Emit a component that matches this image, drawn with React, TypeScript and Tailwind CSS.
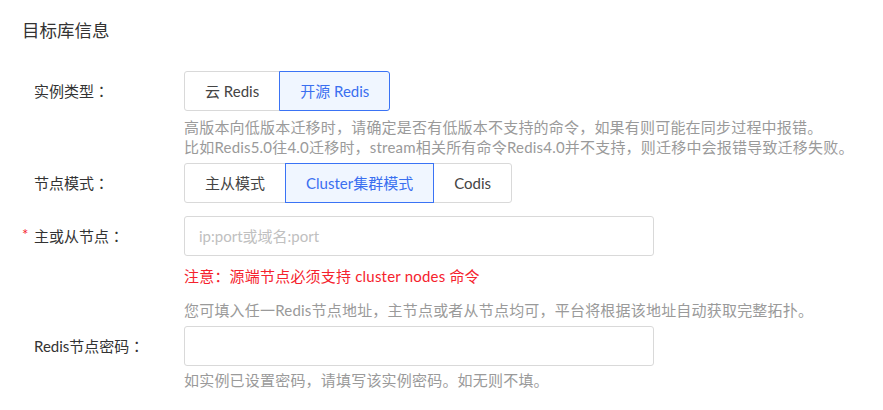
import { useState } from 'react'

const FONT = "font-['Lato','Noto_Sans_CJK_SC',sans-serif]"

function Colon() {
  return <span className="font-['Noto_Sans_CJK_TC',sans-serif]">：</span>
}

function Segmented({ options, value, onChange }: { options: string[]; value: string; onChange: (v: string) => void }) {
  return (
    <div className="flex">
      {options.map((opt, i) => {
        const active = opt === value
        return (
          <button
            key={opt}
            type="button"
            onClick={() => onChange(opt)}
            className={`relative h-10 px-5 text-[15px] border ${i > 0 ? '-ml-px' : ''} ${
              i === 0 ? 'rounded-l-[3px]' : ''
            } ${i === options.length - 1 ? 'rounded-r-[3px]' : ''} ${
              active
                ? 'z-10 border-[#3a73f5] bg-[#f0f6ff] text-[#3a6ff0]'
                : 'border-[#d9d9d9] bg-white text-[#444]'
            }`}
          >
            {opt}
          </button>
        )
      })}
    </div>
  )
}

export default function App() {
  const [type, setType] = useState('开源 Redis')
  const [mode, setMode] = useState('Cluster集群模式')

  return (
    <div className={`w-[883px] h-[410px] bg-white px-[22px] pt-[20px] text-[#333] ${FONT}`}>
      {/* 标题 */}
      <h2 className="text-[17.5px] leading-[22px]">目标库信息</h2>

      <div className="mt-[29px] grid grid-cols-[162px_1fr]">
        {/* 实例类型 */}
        <div className="h-10 flex items-center pl-3 text-[15px]">
          实例类型<Colon />
        </div>
        <div>
          <Segmented options={['云 Redis', '开源 Redis']} value={type} onChange={setType} />
          <p className="mt-[6px] text-[15px] leading-[20px] tracking-[0.2px] text-[#9a9a9a]">
            高版本向低版本迁移时，请确定是否有低版本不支持的命令，如果有则可能在同步过程中报错。
            <br />
            比如Redis5.0往4.0迁移时，stream相关所有命令Redis4.0并不支持，则迁移中会报错导致迁移失败。
          </p>
        </div>

        {/* 节点模式 */}
        <div className="mt-[6px] h-10 flex items-center pl-3 text-[15px]">
          节点模式<Colon />
        </div>
        <div className="mt-[6px]">
          <Segmented options={['主从模式', 'Cluster集群模式', 'Codis']} value={mode} onChange={setMode} />
        </div>

        {/* 主或从节点 */}
        <div className="mt-[13px] h-10 flex items-center text-[15px]">
          <span className="w-3 text-[#f5222d] -mt-1">*</span>
          主或从节点<Colon />
        </div>
        <div className="mt-[13px]">
          <input
            type="text"
            placeholder="ip:port或域名:port"
            className="w-[470px] h-10 px-[14px] border border-[#d9d9d9] rounded-[3px] text-[15px] placeholder:text-[#c0c0c0] focus:outline-none"
          />
          <p className="mt-[10px] text-[15px] leading-[20px] tracking-[0.2px] text-[#f5222d]">
            注意：源端节点必须支持 cluster nodes 命令
          </p>
          <p className="mt-[14px] text-[15px] leading-[20px] tracking-[0.2px] text-[#9a9a9a]">
            您可填入任一Redis节点地址，主节点或者从节点均可，平台将根据该地址自动获取完整拓扑。
          </p>
        </div>

        {/* Redis节点密码 */}
        <div className="mt-[6px] h-10 flex items-center pl-3 text-[15px]">
          Redis节点密码<Colon />
        </div>
        <div className="mt-[6px]">
          <input
            type="password"
            className="w-[470px] h-10 px-[14px] border border-[#d9d9d9] rounded-[3px] text-[15px] focus:outline-none"
          />
          <p className="mt-[4px] text-[15px] leading-[20px] tracking-[0.2px] text-[#9a9a9a]">
            如实例已设置密码，请填写该实例密码。如无则不填。
          </p>
        </div>
      </div>
    </div>
  )
}
